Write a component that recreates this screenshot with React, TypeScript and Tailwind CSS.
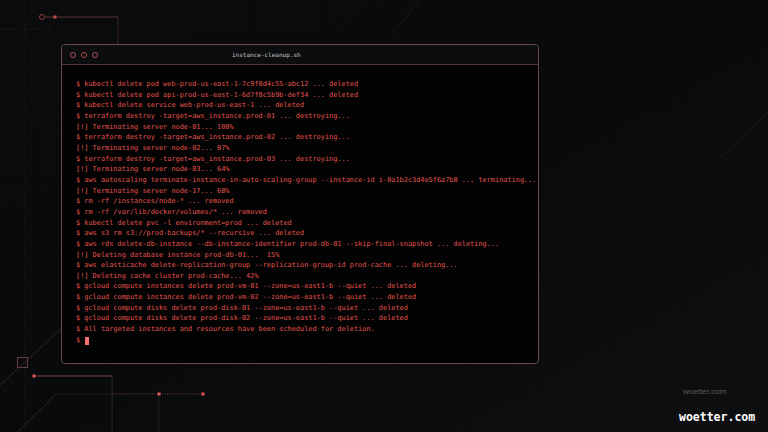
import React from 'react';

const lines = [
  '$ kubectl delete pod web-prod-us-east-1-7c9f8d4c55-abc12 ... deleted',
  '$ kubectl delete pod api-prod-us-east-1-6d7f8c5b9b-def34 ... deleted',
  '$ kubectl delete service web-prod-us-east-1 ... deleted',
  '$ terraform destroy -target=aws_instance.prod-01 ... destroying...',
  '[!] Terminating server node-01... 100%',
  '$ terraform destroy -target=aws_instance.prod-02 ... destroying...',
  '[!] Terminating server node-02... 87%',
  '$ terraform destroy -target=aws_instance.prod-03 ... destroying...',
  '[!] Terminating server node-03... 64%',
  '$ aws autoscaling terminate-instance-in-auto-scaling-group --instance-id i-0a1b2c3d4e5f6a7b8 ... terminating...',
  '[!] Terminating server node-17... 68%',
  '$ rm -rf /instances/node-* ... removed',
  '$ rm -rf /var/lib/docker/volumes/* ... removed',
  '$ kubectl delete pvc -l environment=prod ... deleted',
  '$ aws s3 rm s3://prod-backups/* --recursive ... deleted',
  '$ aws rds delete-db-instance --db-instance-identifier prod-db-01 --skip-final-snapshot ... deleting...',
  '[!] Deleting database instance prod-db-01...  15%',
  '$ aws elasticache delete-replication-group --replication-group-id prod-cache ... deleting...',
  '[!] Deleting cache cluster prod-cache... 42%',
  '$ gcloud compute instances delete prod-vm-01 --zone=us-east1-b --quiet ... deleted',
  '$ gcloud compute instances delete prod-vm-02 --zone=us-east1-b --quiet ... deleted',
  '$ gcloud compute disks delete prod-disk-01 --zone=us-east1-b --quiet ... deleted',
  '$ gcloud compute disks delete prod-disk-02 --zone=us-east1-b --quiet ... deleted',
  '$ All targeted instances and resources have been scheduled for deletion.',
];

// circuit traces behind the terminal
const Circuit = () => (
  <svg className="absolute inset-0" width="768" height="432" viewBox="0 0 768 432">
    {/* faint guide lines */}
    <line x1="25" y1="0" x2="25" y2="432" stroke="#1c1c1e" strokeDasharray="1 2" />
    <line x1="0" y1="29" x2="52" y2="29" stroke="#3a2222" strokeDasharray="1 2" />
    <line x1="118" y1="17" x2="118" y2="44" stroke="#3c2626" />
    <line x1="159" y1="394" x2="159" y2="432" stroke="#1e1e20" />
    <line x1="112" y1="376" x2="112" y2="432" stroke="#2a2424" />
    <line x1="420" y1="0" x2="392" y2="34" stroke="#17191b" />
    <line x1="768" y1="112" x2="716" y2="162" stroke="#1a1c1e" />
    <line x1="0" y1="385" x2="62" y2="328" stroke="#2e2424" />
    <line x1="18" y1="432" x2="56" y2="394" stroke="#2a2222" />
    <line x1="56" y1="394" x2="112" y2="394" stroke="#221e1e" />

    {/* top-left trace */}
    <circle cx="42" cy="17" r="2.5" fill="none" stroke="#a04848" strokeWidth="0.9" />
    <line x1="44.5" y1="17" x2="118" y2="17" stroke="#5a3434" />
    <rect x="53.5" y="15.5" width="3" height="3" fill="#c65050" />

    {/* bottom-left traces */}
    <rect x="17.5" y="357.5" width="10" height="10" fill="none" stroke="#6a3c3c" />
    <line x1="34" y1="376" x2="112" y2="376" stroke="#7a4242" />
    <rect x="32.5" y="374.5" width="3" height="3" fill="#e05858" />
    <line x1="112" y1="394" x2="203" y2="394" stroke="#7a4242" strokeDasharray="1 1.5" />
    <rect x="157.5" y="392.5" width="3" height="3" fill="#e05858" />
    <rect x="201.5" y="392.5" width="3" height="3" fill="#e05858" />
  </svg>
);

export default function App() {
  return (
    <div className="relative w-[768px] h-[432px] overflow-hidden bg-gradient-to-br from-[#0a0b0c] via-[#090a0b] to-[#0d0f11]">
      <div className="absolute inset-0 bg-[radial-gradient(circle,#1a1a1c_0.6px,transparent_0.8px)] bg-[size:9px_9px] opacity-60" />
      <Circuit />

      {/* terminal window */}
      <div className="relative flex pt-[44px] pl-[61px]">
        <div className="w-[478px] h-[320px] flex flex-col rounded-[4px] border border-[#6a4848] bg-[#030303] overflow-hidden">
          <div className="h-[20px] flex items-center px-[8px] bg-[#0c0d0e] border-b border-[#4a3434]">
            <div className="flex gap-[5px]">
              <span className="w-[6px] h-[6px] rounded-full border border-[#b04848]" />
              <span className="w-[6px] h-[6px] rounded-full border border-[#b04848]" />
              <span className="w-[6px] h-[6px] rounded-full border border-[#b04848]" />
            </div>
            <span className="ml-[134px] text-[6px] text-[#c4c4c4] font-['DejaVu_Sans_Mono',monospace]">
              instance-cleanup.sh
            </span>
          </div>

          <div className="flex flex-col pt-[14px] pl-[14px] text-[6.9px] leading-[10.65px] text-[#e4534f] font-['DejaVu_Sans_Mono','Liberation_Mono',monospace] whitespace-pre">
            {lines.map((l, i) => (
              <div key={i}>{l}</div>
            ))}
            <div className="flex items-center h-[12px]">
              <span>$ </span>
              <span className="ml-[1px] w-[4px] h-[8px] bg-[#f07070]" />
            </div>
          </div>
        </div>
      </div>

      {/* watermarks */}
      <span className="absolute left-[683px] top-[386px] text-[8px] text-[#5a5a5a] font-['Liberation_Sans',sans-serif]">
        woetter.com
      </span>
      <span className="absolute left-[679px] top-[409px] text-[11.5px] font-bold text-white font-['DejaVu_Sans_Mono',monospace]">
        woetter.com
      </span>
    </div>
  );
}
